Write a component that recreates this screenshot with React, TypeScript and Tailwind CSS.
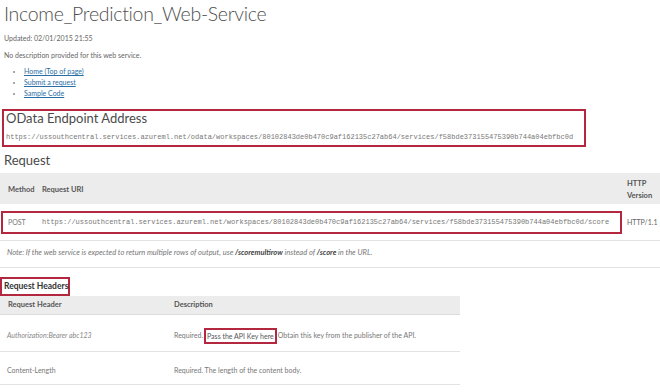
const endpointUrl =
  'https://ussouthcentral.services.azureml.net/odata/workspaces/80102843de0b470c9af162135c27ab64/services/f58bde373155475390b744a04ebfbc0d';
const requestUrl =
  'https://ussouthcentral.services.azureml.net/workspaces/80102843de0b470c9af162135c27ab64/services/f58bde373155475390b744a04ebfbc0d/score';

const links = ['Home (Top of page)', 'Submit a request', 'Sample Code'];

export default function App() {
  return (
    <div className="w-[660px] h-[392px] overflow-hidden bg-white text-[#666] font-['Lato','Open_Sans',sans-serif]">
      {/* header */}
      <div className="pl-[4px] pt-[2px]">
        <h1 className="h-[24px] leading-[24px] text-[19.5px] tracking-[-0.3px] font-light text-[#4f4f4f]">
          Income_Prediction_Web-Service
        </h1>
        <p className="mt-[7px] h-[10px] leading-[10px] text-[7px]">Updated: 02/01/2015 21:55</p>
        <p className="mt-[7px] h-[10px] leading-[10px] text-[7px]">
          No description provided for this web service.
        </p>
        <ul className="mt-[6px] pl-[20px] list-disc text-[7px] leading-[11px] marker:text-[#888]">
          {links.map((l) => (
            <li key={l} className="h-[11px]">
              <a className="text-[#2a6ea6] underline">{l}</a>
            </li>
          ))}
        </ul>
      </div>

      {/* odata endpoint */}
      <div className="mt-[10px] ml-[2px] w-[584px] h-[38px] border-2 border-[#b3283e] pl-[2px]">
        <h2 className="h-[14px] leading-[14px] text-[13px] text-[#4a4a4a]">OData Endpoint Address</h2>
        <p className="mt-[7px] h-[10px] leading-[10px] text-[7px] font-['Liberation_Mono',monospace] text-[#777] whitespace-nowrap">
          {endpointUrl}
        </p>
      </div>

      {/* request */}
      <h2 className="mt-[5px] pl-[4px] h-[16px] leading-[16px] text-[13px] text-[#4a4a4a]">Request</h2>
      <div className="mt-[5px] h-[31px] bg-[#ececec] flex items-center pt-[3px] text-[7.5px] font-bold text-[#555]">
        <span className="w-[42px] pl-[8px]">Method</span>
        <span className="flex-1">Request URI</span>
        <span className="w-[33px] leading-[12px]">
          HTTP
          <br />
          Version
        </span>
      </div>
      <div className="h-[37px] border-b border-[#e3e3e3] flex items-start pt-[7px]">
        <div className="ml-[1px] w-[621px] h-[23px] border-2 border-[#b3283e] flex items-center text-[7px] whitespace-nowrap">
          <span className="w-[39px] pl-[5px] text-[#777]">POST</span>
          <span className="font-['Liberation_Mono',monospace] text-[#777]">{requestUrl}</span>
        </div>
        <span className="ml-[5px] h-[23px] leading-[23px] text-[7px]">HTTP/1.1</span>
      </div>
      <div className="h-[27px] border-b border-[#e3e3e3] pl-[7px] pt-[7px] text-[7.5px] leading-[10px] italic text-[#777]">
        Note: If the web service is expected to return multiple rows of output, use{' '}
        <b className="text-[#444]">/scoremultirow</b> instead of <b className="text-[#444]">/score</b> in the URL.
      </div>

      {/* request headers */}
      <div className="mt-[9px] w-[70px] h-[19px] border-2 border-[#b3283e] pl-[2px] leading-[15px] text-[8.5px] font-bold text-[#333] whitespace-nowrap">
        Request Headers
      </div>
      <div className="w-[460px] text-[7px]">
        <div className="h-[19px] bg-[#ececec] border-b border-[#dcdcdc] flex items-center font-bold text-[#555] text-[7.5px]">
          <span className="w-[174px] pl-[8px]">Request Header</span>
          <span>Description</span>
        </div>
        <div className="h-[37px] border-b border-[#e3e3e3] flex items-center pt-[5px]">
          <span className="w-[174px] pl-[7px] italic text-[#888]">Authorization:Bearer abc123</span>
          <span className="flex items-center whitespace-nowrap text-[#777]">
            Required.
            <span className="mx-[1px] h-[16px] px-[1px] border-2 border-[#b3283e] leading-[12px] text-[#555]">
              Pass the API Key here
            </span>
            Obtain this key from the publisher of the API.
          </span>
        </div>
        <div className="h-[33px] border-b border-[#e3e3e3] flex items-center pt-[5px] text-[#777]">
          <span className="w-[174px] pl-[7px]">Content-Length</span>
          <span>Required. The length of the content body.</span>
        </div>
      </div>
    </div>
  );
}
